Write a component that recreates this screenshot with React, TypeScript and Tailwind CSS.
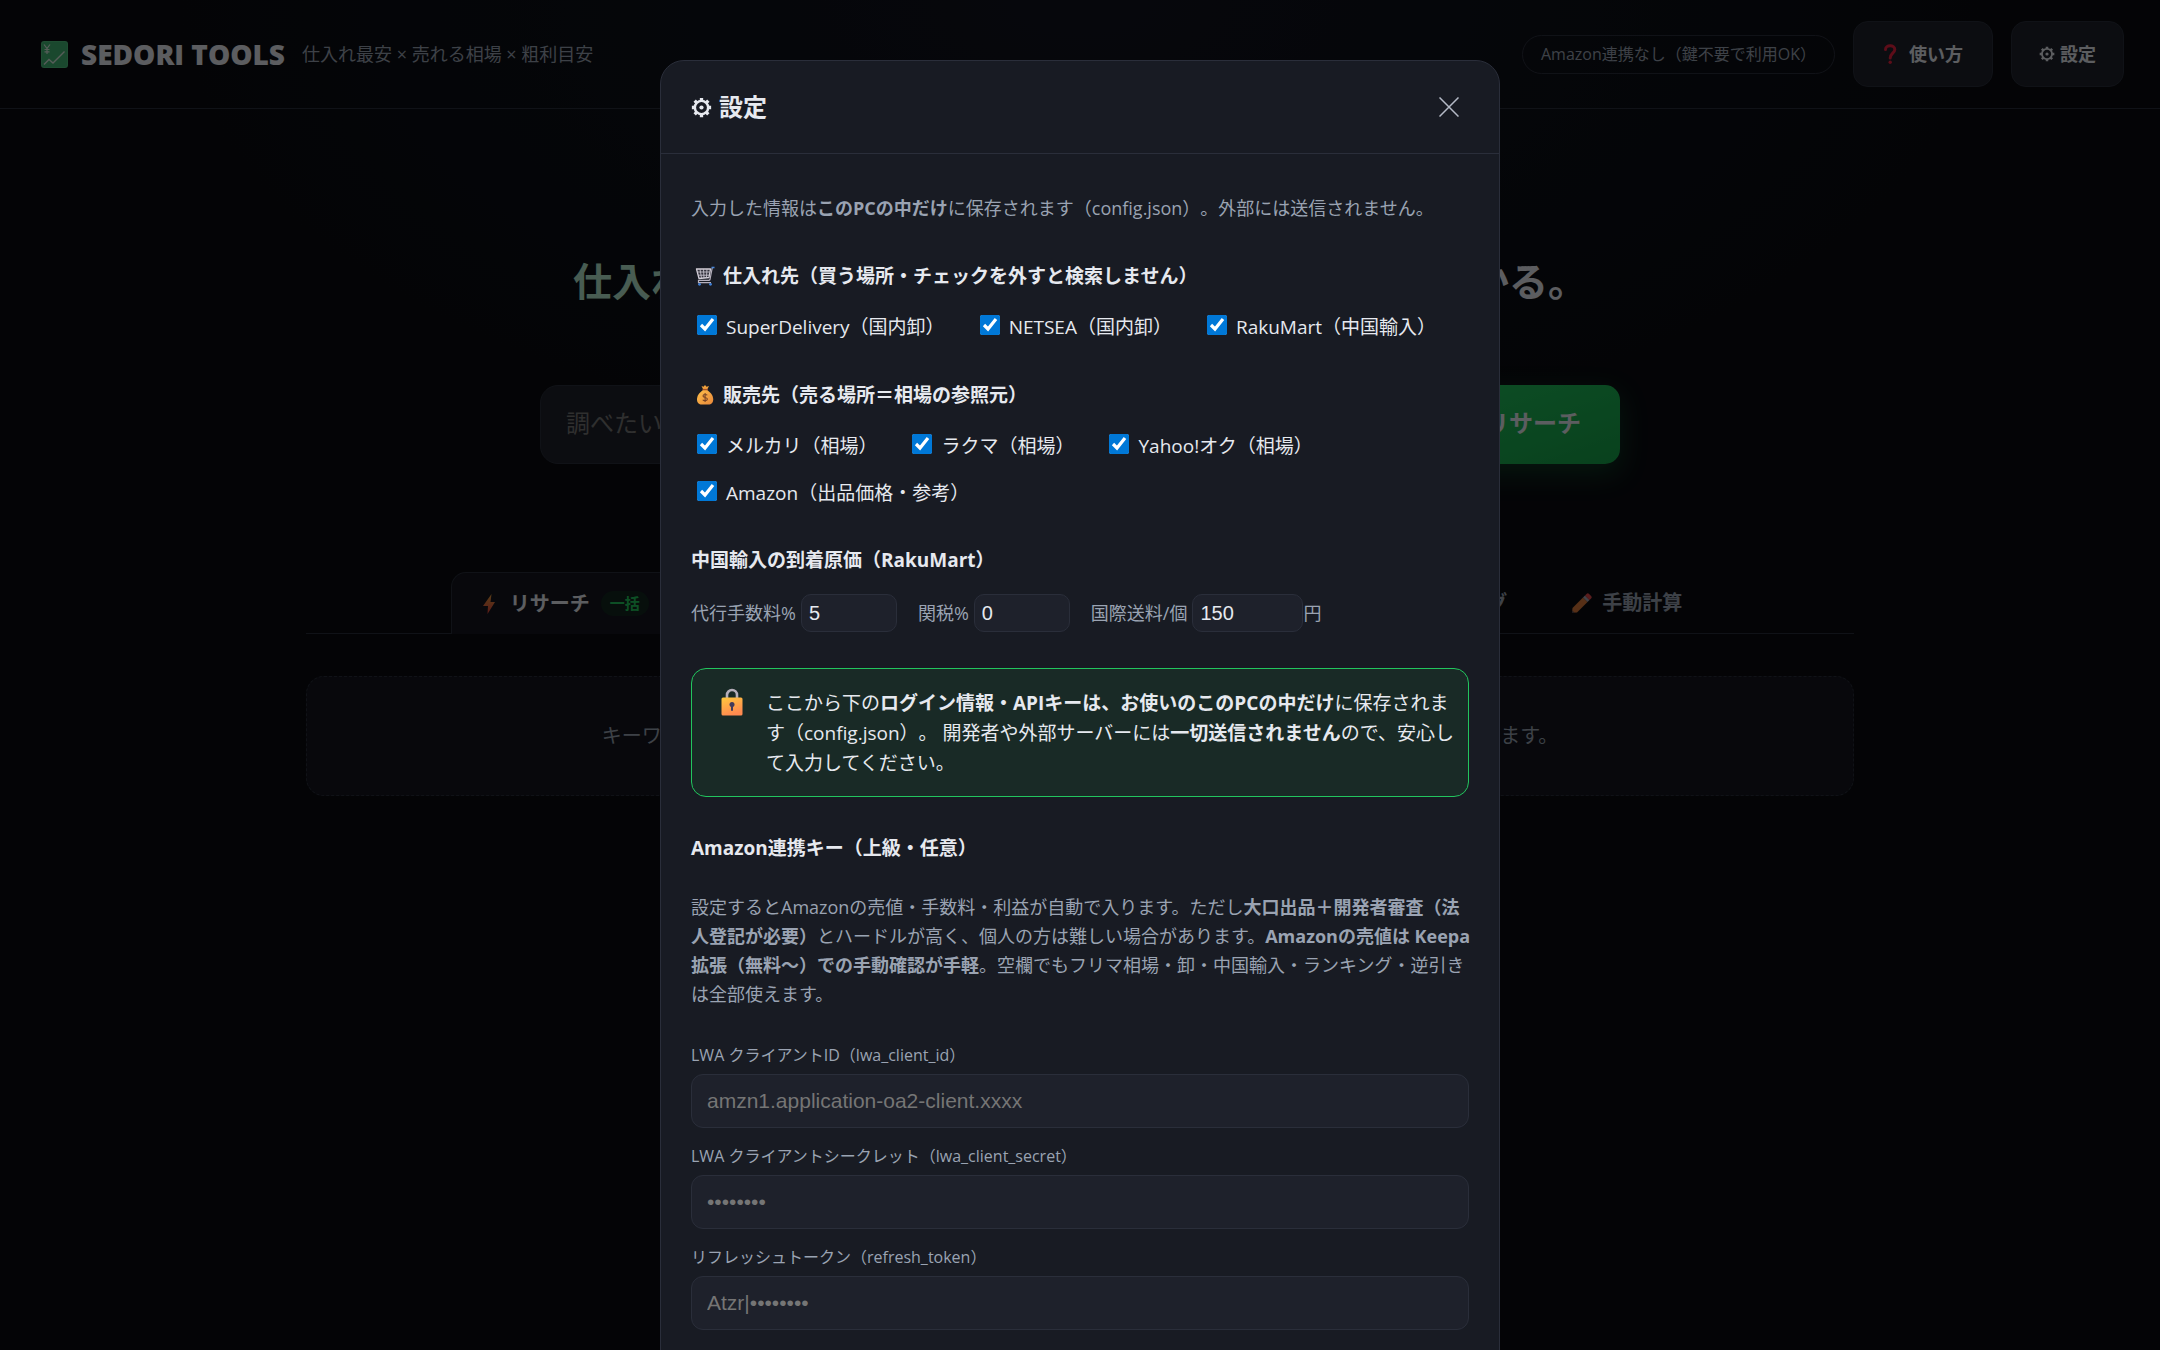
import React from 'react';

type CheckItem = { id: string; label: string };

const BUY_SITES: CheckItem[] = [
    { id: 'superdelivery', label: 'SuperDelivery（国内卸）' },
    { id: 'netsea', label: 'NETSEA（国内卸）' },
    { id: 'rakumart', label: 'RakuMart（中国輸入）' },
];

const SELL_SITES: CheckItem[] = [
    { id: 'mercari', label: 'メルカリ（相場）' },
    { id: 'rakuma', label: 'ラクマ（相場）' },
    { id: 'yahoo', label: 'Yahoo!オク（相場）' },
    { id: 'amazon', label: 'Amazon（出品価格・参考）' },
];

const KEY_FIELDS = [
    { id: 'lwa_client_id', label: 'LWA クライアントID（lwa_client_id）', placeholder: 'amzn1.application-oa2-client.xxxx' },
    { id: 'lwa_client_secret', label: 'LWA クライアントシークレット（lwa_client_secret）', placeholder: '••••••••' },
    { id: 'refresh_token', label: 'リフレッシュトークン（refresh_token）', placeholder: 'Atzr|••••••••' },
];

function GearIcon({ className }: { className: string }) {
    return (
        <svg viewBox="0 0 24 24" className={className} fill="none" stroke="currentColor" aria-hidden="true">
            <circle cx="12" cy="12" r="7.6" strokeWidth="2.800" />
            <circle cx="12" cy="12" r="2.4" fill="currentColor" stroke="none" />
            <path
                strokeWidth="3.800"
                d="M12 1v3.500M12 19.500v3.500M1 12h3.500M19.500 12H23M4.200 4.200l2.500 2.500M17.300 17.300l2.500 2.500M4.200 19.800l2.500-2.500M17.300 6.700l2.500-2.500"
            />
        </svg>
    );
}

function ChartIcon() {
    return (
        <svg viewBox="0 0 27 27" className="size-[27px]" fill="none" aria-hidden="true">
            <rect width="27" height="27" rx="3" fill="#4fc07d" />
            <rect x="1" y="1" width="25" height="25" rx="2" fill="#43b374" />
            <path d="M3 3.500l3 4 3-4M6 7.500V13M3.500 8.500h5M3.500 10.800h5" stroke="#d8e8de" strokeWidth="1.200" />
            <path d="M3 23.500l5-5 4 3.500 11.500-11.500" stroke="#d8e8de" strokeWidth="1.400" />
        </svg>
    );
}

function CartIcon() {
    return (
        <svg viewBox="0 0 20 20" className="size-[20px]" fill="none" aria-hidden="true">
            <path d="M1.500 3h14l-1.500 8.500-10 1z" fill="#34333d" stroke="#d3cfd8" strokeWidth="1.300" strokeLinejoin="round" />
            <path d="M2.200 6h12.500M3 9.200h11.200M5 3l1.500 9M8.500 3l.5 9M12 3l-.6 9" stroke="#c3bfc9" strokeWidth="0.900" />
            <path d="M17.200 2l-2.200 11.500q-.2.900-1.200.9H3.500v2.200H16" stroke="#b5b0bd" strokeWidth="1.200" />
            <path d="M16.500 1.500h3" stroke="#4a86d8" strokeWidth="1.600" />
            <circle cx="4.500" cy="18.300" r="1.400" fill="#3f7fd6" />
            <circle cx="15.500" cy="18.300" r="1.400" fill="#3f7fd6" />
        </svg>
    );
}

function MoneyBagIcon() {
    return (
        <svg viewBox="0 0 20 20" className="size-[20px]" fill="none" aria-hidden="true">
            <defs>
                <linearGradient id="bag" x1="0" y1="0" x2="1" y2="1">
                    <stop offset="0" stopColor="#ffc14a" />
                    <stop offset="1" stopColor="#e8873a" />
                </linearGradient>
            </defs>
            <path d="M6.500 1l2 .8L10 0l1.500 1.800 2.500-.8-1.800 3.500H8.200z" fill="#f0a03c" />
            <path d="M8 5h4.200c3.300 2.300 6 5.500 6 9.300 0 3.700-2 5.200-4.700 5.200H6.700C4 19.500 2 18 2 14.300 2 10.500 4.700 7.300 8 5z" fill="url(#bag)" />
            <path d="M7.500 4.600h5.200" stroke="#a8532a" strokeWidth="1.400" />
            <path d="M12.200 10.300c-.6-1.100-4.200-1.200-4.200.6 0 2 4.400 1.200 4.400 3.200 0 1.900-3.800 1.900-4.600.6M10.100 8v9" stroke="#7a4526" strokeWidth="1.100" />
        </svg>
    );
}

function LockIcon() {
    return (
        <svg viewBox="0 0 22 28" className="h-[28px] w-[22px] shrink-0" fill="none" aria-hidden="true">
            <defs>
                <linearGradient id="lock" x1="0" y1="0" x2="0.400" y2="1">
                    <stop offset="0" stopColor="#ffc83d" />
                    <stop offset="1" stopColor="#ff8a50" />
                </linearGradient>
            </defs>
            <path d="M6 11V7a5 5 0 0 1 10 0v4" stroke="#b5aeba" strokeWidth="2.600" />
            <rect x="0.500" y="9.500" width="21" height="18" rx="1.500" fill="url(#lock)" />
            <circle cx="11" cy="16.500" r="2.500" fill="#433b5b" />
            <path d="M11 17v5" stroke="#433b5b" strokeWidth="2" strokeLinecap="round" />
        </svg>
    );
}

function QuestionIcon() {
    return (
        <svg viewBox="0 0 14 20" className="h-[20px] w-[14px]" fill="none" aria-hidden="true">
            <path d="M2.500 5.500C2.500 0.800 11.800 0.300 11.800 5.500 11.800 9 7.200 9.500 7.200 14" stroke="#e8213f" strokeWidth="3" strokeLinecap="round" />
            <circle cx="7.200" cy="18.200" r="1.700" fill="#e8213f" />
        </svg>
    );
}

function BoltIcon() {
    return (
        <svg viewBox="0 0 12 20" className="h-[20px] w-[12px]" aria-hidden="true">
            <defs>
                <linearGradient id="bolt" x1="0" y1="0" x2="0" y2="1">
                    <stop offset="0" stopColor="#e09a3c" />
                    <stop offset="1" stopColor="#e0423c" />
                </linearGradient>
            </defs>
            <path d="M8.500 0L0 12h5L4.500 20 12 8H7.500z" fill="url(#bolt)" />
        </svg>
    );
}

function PencilIcon() {
    return (
        <svg viewBox="0 0 20 20" className="size-[20px]" aria-hidden="true">
            <path d="M0.500 15L11 4.500 15.500 9 5 19.500 0 19.800z" fill="#d9783a" />
            <path d="M0.300 17.500l2.300 2.200-2.600.3z" fill="#4a4450" />
            <path d="M11 4.500l2-2L17.500 7l-2 2z" fill="#a8a2b0" />
            <path d="M13 2.500l1.500-1.600q1.300-1.200 2.600 0l2 2q1.300 1.300 0 2.500L17.500 7z" fill="#e04a4a" />
        </svg>
    );
}

function CheckRow({ items }: { items: CheckItem[] }) {
    return (
        <div className="mt-[17px] flex flex-wrap gap-x-[29px] gap-y-[9px] text-[19px] leading-[38px]">
            {items.map((item) => (
                <label key={item.id} htmlFor={item.id} className="flex items-center whitespace-nowrap pl-[6px]">
                    <input
                        id={item.id}
                        type="checkbox"
                        defaultChecked
                        className="mr-[9px] mb-[5px] size-[20px] accent-[#0078d7]"
                    />
                    {item.label}
                </label>
            ))}
        </div>
    );
}

function CostField({ id, label, value, width, unit }: { id: string; label: string; value: number; width: string; unit?: string }) {
    return (
        <label htmlFor={id} className="flex items-center whitespace-nowrap">
            {label}
            <input
                id={id}
                type="text"
                inputMode="numeric"
                defaultValue={value}
                className={`ml-[5px] h-[38px] rounded-[10px] border border-[#2a2e3a] bg-[#1e212b] px-[7px] font-['Liberation_Sans',sans-serif] text-[20px] text-[#e6e9ef] ${width}`}
            />
            {unit}
        </label>
    );
}

function Header() {
    return (
        <header className="flex h-[109px] items-center justify-between border-b border-[#2a2e3a] px-[36px]">
            <div className="flex items-center">
                <span className="ml-[5px]">
                    <ChartIcon />
                </span>
                <h1 className="ml-[13px] text-[28px] font-extrabold">SEDORI TOOLS</h1>
                <p className="ml-[17px] text-[18px] text-[#9aa3b2]">仕入れ最安 × 売れる相場 × 粗利目安</p>
            </div>
            <div className="flex items-center gap-[18px]">
                <span className="rounded-full border border-[#2a2e3a] px-[18px] text-[16px] leading-[37px] text-[#9aa3b2]">
                    Amazon連携なし（鍵不要で利用OK）
                </span>
                <button className="flex h-[66px] items-center gap-[12px] rounded-[15px] border border-[#2a2e3a] bg-[#1e212b] px-[29px] text-[18px] font-bold">
                    <QuestionIcon />
                    使い方
                </button>
                <button className="flex h-[66px] items-center gap-[5px] rounded-[15px] border border-[#2a2e3a] bg-[#1e212b] px-[27px] text-[18px] font-bold">
                    <GearIcon className="size-[16px]" />
                    設定
                </button>
            </div>
        </header>
    );
}

function Tabs() {
    return (
        <nav className="flex justify-center gap-[6px] border-b border-[#2a2e3a] text-[20px] font-bold text-[#9aa3b2]">
            <button className="-mb-px flex h-[62px] items-center rounded-t-[15px] border border-b-0 border-[#2a2e3a] bg-[#14161f] px-[31px] text-[#e6e9ef]">
                <BoltIcon />
                <span className="ml-[15px]">リサーチ</span>
                <span className="ml-[11px] rounded-full bg-[#12261e] px-[9px] text-[15px] leading-[25px] text-[#22c55e]">一括</span>
            </button>
            <button className="px-[29px]">仕入れ先の検索</button>
            <button className="px-[29px]">相場チェック</button>
            <button className="px-[29px]">逆引きリサーチ</button>
            <button className="px-[29px]">売れ筋人気ランキング</button>
            <button className="flex items-center gap-[10px] pr-[27px] pl-[30px]">
                <PencilIcon />
                手動計算
            </button>
        </nav>
    );
}

function SettingsModal() {
    return (
        <div className="fixed inset-0 overflow-y-auto bg-black/60 pt-[60px] [scrollbar-width:none]">
            <section
                role="dialog"
                aria-labelledby="settings-title"
                className="mx-auto max-w-[840px] rounded-[24px] border border-[#2a2e3a] bg-[#181b23]"
            >
                <div className="flex h-[93px] items-center justify-between border-b border-[#2a2e3a] px-[30px]">
                    <h2 id="settings-title" className="flex items-center gap-[7px] text-[24px] font-bold">
                        <GearIcon className="size-[21px]" />
                        設定
                    </h2>
                    <button aria-label="閉じる" className="p-[10px] text-[#b4bac6]">
                        <svg viewBox="0 0 20 20" className="size-[20px]" stroke="currentColor" strokeWidth="1.500" aria-hidden="true">
                            <path d="M0.500 0.500l19 19M19.500 0.500l-19 19" />
                        </svg>
                    </button>
                </div>

                <div className="px-[30px] pt-[40px] pb-[30px]">
                    <p className="whitespace-nowrap text-[18px] leading-[29px] text-[#9aa3b2]">
                        入力した情報は<b>このPCの中だけ</b>に保存されます（config.json）。外部には送信されません。
                    </p>

                    {/* 仕入れ先 */}
                    <h3 className="mt-[38px] flex items-center gap-[8px] pl-[4px] text-[19px] leading-[30px] font-bold">
                        <CartIcon />
                        仕入れ先（買う場所・チェックを外すと検索しません）
                    </h3>
                    <CheckRow items={BUY_SITES} />

                    {/* 販売先 */}
                    <h3 className="mt-[34px] flex items-center gap-[8px] pl-[4px] text-[19px] leading-[30px] font-bold">
                        <MoneyBagIcon />
                        販売先（売る場所＝相場の参照元）
                    </h3>
                    <CheckRow items={SELL_SITES} />

                    <h3 className="mt-[33px] text-[19px] leading-[30px] font-bold">中国輸入の到着原価（RakuMart）</h3>
                    <div className="mt-[19px] flex gap-[21px] text-[18px] text-[#9aa3b2]">
                        <CostField id="agency" label="代行手数料%" value={5} width="w-[96px]" />
                        <CostField id="duty" label="関税%" value={0} width="w-[96px]" />
                        <CostField id="shipping" label="国際送料/個" value={150} width="w-[111px]" unit="円" />
                    </div>

                    <div className="mt-[36px] flex gap-[23px] rounded-[15px] border border-[#22c55e] bg-[#192a26] px-[29px] pt-[19px] pb-[18px]">
                        <LockIcon />
                        <p className="whitespace-nowrap text-[19px] leading-[30px]">
                            ここから下の<b>ログイン情報・APIキーは、お使いのこのPCの中だけ</b>に保存されま
                            <br />
                            す（config.json）。 開発者や外部サーバーには<b>一切送信されません</b>ので、安心し
                            <br />
                            て入力してください。
                        </p>
                    </div>

                    <h3 className="mt-[36px] text-[19px] leading-[30px] font-bold">Amazon連携キー（上級・任意）</h3>
                    <p className="mt-[30px] whitespace-nowrap text-[18px] leading-[29px] text-[#9aa3b2]">
                        設定するとAmazonの売値・手数料・利益が自動で入ります。ただし<b>大口出品＋開発者審査（法</b>
                        <br />
                        <b>人登記が必要）</b>とハードルが高く、個人の方は難しい場合があります。<b>Amazonの売値は Keepa</b>
                        <br />
                        <b>拡張（無料〜）での手動確認が手軽</b>。空欄でもフリマ相場・卸・中国輸入・ランキング・逆引き
                        <br />
                        は全部使えます。
                    </p>

                    <div className="mt-[33px] flex flex-col gap-[15px]">
                        {KEY_FIELDS.map((field) => (
                            <div key={field.id}>
                                <label htmlFor={field.id} className="block text-[16px] leading-[27px] text-[#9aa3b2]">
                                    {field.label}
                                </label>
                                <input
                                    id={field.id}
                                    type="text"
                                    placeholder={field.placeholder}
                                    className="mt-[5px] block h-[54px] w-full rounded-[12px] border border-[#2a2e3a] bg-[#1e212b] px-[15px] font-['Liberation_Sans',sans-serif] text-[21px] text-[#e6e9ef] placeholder:text-[#757575]"
                                />
                            </div>
                        ))}
                    </div>

                    <button
                        aria-label="保存"
                        className="mt-[36px] block h-[54px] w-full rounded-[15px] bg-linear-to-br from-[#22c55e] to-[#16a34a]"
                    />
                </div>
            </section>
        </div>
    );
}

export default function App() {
    return (
        <div className="min-h-screen bg-[#0a0c11] bg-[radial-gradient(ellipse_900px_450px_at_50%_0%,#10131f,#0a0c11)] font-['Open_Sans','Noto_Sans_CJK_JP',sans-serif] text-[#e6e9ef] [text-spacing-trim:space-all]">
            <Header />
            <main className="mx-auto max-w-[1620px] px-[36px]">
                <h2 className="mt-[141px] text-center text-[39px] leading-[62px] font-bold">
                    <span className="text-[#b4e6cc]">仕入れ最安と売れる相場</span>、粗利まで一括検索で今わかる。
                </h2>
                <div className="mx-auto mt-[73px] flex max-w-[1080px] gap-[15px]">
                    <input
                        type="search"
                        aria-label="キーワード"
                        placeholder="調べたい商品のキーワードを入力"
                        className="h-[79px] flex-1 rounded-[18px] border border-[#2a2e3a] bg-[#1e212b] px-[25px] pb-[4px] text-[24px] placeholder:text-[#757575]"
                    />
                    <button className="rounded-[15px] bg-linear-to-br from-[#22c55e] to-[#16a34a] px-[39px] pb-[4px] text-[24px] font-bold shadow-[0_9px_27px_#22c55e40]">
                        一括リサーチ
                    </button>
                </div>
                <div className="mt-[108px]">
                    <Tabs />
                </div>
                <p className="mt-[42px] rounded-[18px] border border-dashed border-[#2a2e3a] bg-[#14161f] py-[43px] text-center text-[20px] leading-[32px] text-[#9aa3b2]">
                    キーワードを入れて「一括リサーチ」を押すと、仕入れの最安と売れる相場、粗利の目安が表示されます。
                </p>
            </main>
            <SettingsModal />
        </div>
    );
}
